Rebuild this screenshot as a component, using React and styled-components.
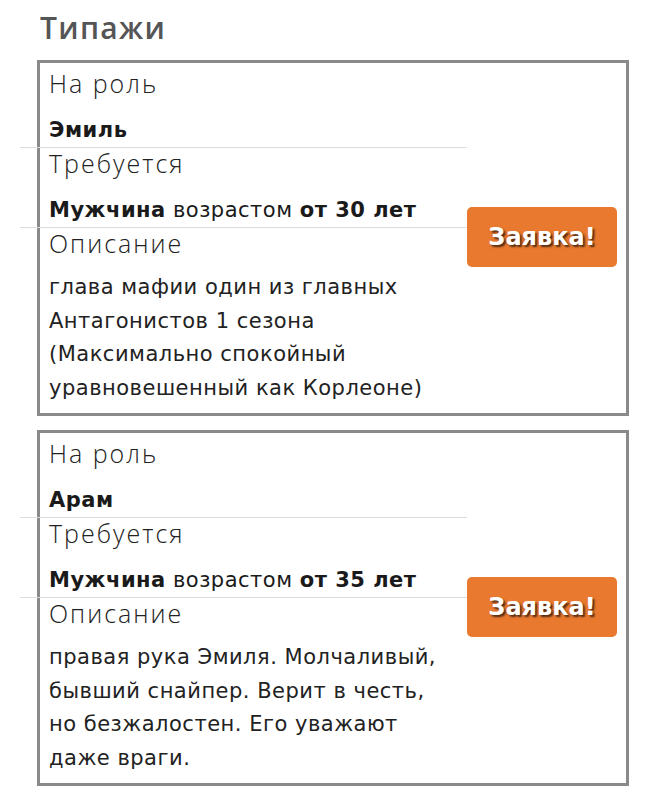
import React from "react";
import styled, { createGlobalStyle } from "styled-components";

const GlobalStyle = createGlobalStyle`
  body {
    margin: 0;
    background: #ffffff;
    font-family: "DejaVu Sans", "Noto Sans", sans-serif;
    color: #1e1e1e;
  }
`;

const Page = styled.div`
  padding: 10px 37px 0 37px;
  width: 592px;
`;

const Title = styled.h2`
  margin: 0 0 14px 3px;
  font-family: "Open Sans", sans-serif;
  font-size: 30px;
  line-height: 36px;
  font-weight: 600;
  letter-spacing: 1.3px;
  color: #555555;
`;

const Card = styled.div`
  display: flex;
  align-items: center;
  border: 3px solid #8a8a8a;
  padding: 5px 9px 8px 9px;
  margin-bottom: 14px;
`;

const Info = styled.div`
  width: 418px;
  display: flex;
  flex-direction: column;
`;

const Label = styled.div`
  font-family: "Open Sans", sans-serif;
  font-size: 25px;
  line-height: 30px;
  font-weight: 300;
  letter-spacing: 2px;
  color: #222;
`;

const Value = styled.div`
  padding: 20px 0 4px 0;
  font-size: 21px;
  line-height: 25px;
  font-weight: ${(p) => (p.$bold ? 700 : 400)};
  letter-spacing: 0.5px;
  color: #1a1a1a;

  b {
    font-weight: 700;
  }
`;

const Separator = styled.div`
  margin-left: -29px;
  border-top: 1px solid #dcdcdc;
`;

const Description = styled.div`
  margin-top: 13px;
  font-size: 21px;
  line-height: 33.5px;
  letter-spacing: 0.5px;
  color: #222;
`;

const DescLine = styled.span`
  display: block;
  white-space: nowrap;
`;

const ApplyButton = styled.button`
  width: 150px;
  height: 60px;
  flex-shrink: 0;
  border: none;
  border-radius: 5px;
  background: #e8792f;
  color: #ffffff;
  font-family: "DejaVu Sans", sans-serif;
  font-size: 24px;
  font-weight: 700;
  text-shadow: 2px 2px 2px rgba(0, 0, 0, 0.65);
  cursor: pointer;
`;

const roles = [
  {
    name: "Эмиль",
    age: "30",
    lines: [
      "глава мафии один из главных",
      "Антагонистов 1 сезона",
      "(Максимально спокойный",
      "уравновешенный как Корлеоне)",
    ],
  },
  {
    name: "Арам",
    age: "35",
    lines: [
      "правая рука Эмиля. Молчаливый,",
      "бывший снайпер. Верит в честь,",
      "но безжалостен. Его уважают",
      "даже враги.",
    ],
  },
];

const RoleCard = ({ role }) => (
  <Card>
    <Info>
      <Label>На роль</Label>
      <Value $bold>{role.name}</Value>
      <Separator />
      <Label>Требуется</Label>
      <Value>
        <b>Мужчина</b> возрастом <b>от {role.age} лет</b>
      </Value>
      <Separator />
      <Label>Описание</Label>
      <Description>
        {role.lines.map((line) => (
          <DescLine key={line}>{line}</DescLine>
        ))}
      </Description>
    </Info>
    <ApplyButton>Заявка!</ApplyButton>
  </Card>
);

export default function App() {
  return (
    <>
      <GlobalStyle />
      <Page>
        <Title>Типажи</Title>
        {roles.map((role) => (
          <RoleCard key={role.name} role={role} />
        ))}
      </Page>
    </>
  );
}
